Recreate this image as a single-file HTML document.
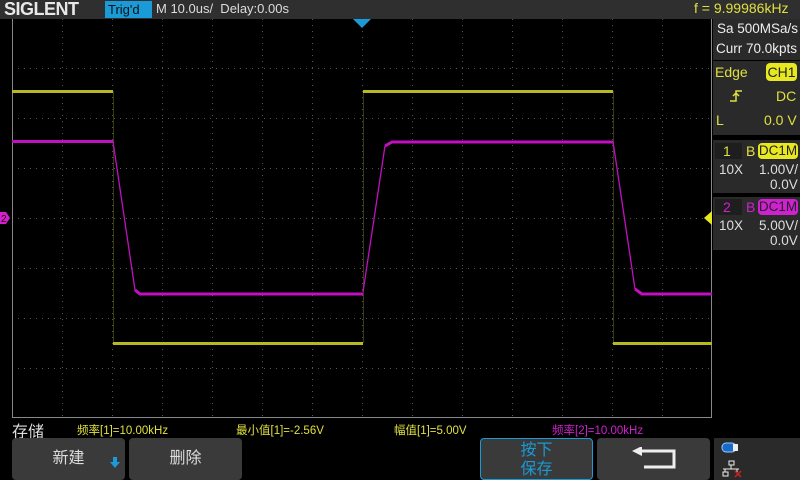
<!DOCTYPE html>
<html><head><meta charset="utf-8"><style>
body{margin:0;width:800px;height:480px;background:#000;overflow:hidden;font-family:"Liberation Sans","Noto Sans CJK SC",sans-serif;position:relative}
.a{position:absolute;white-space:nowrap}
.top{left:0;top:0;width:800px;height:19px;background:#2f2f2f}
.rp{background:#2a2a2a}
.btn{position:absolute;top:438px;height:42px;background:#3a3a3a;border-radius:4px;color:#ddd;font-size:16px;text-align:center}
</style></head><body>
<div class="a top"></div>
<div class="a" style="left:4px;top:-1px;font-size:18px;font-weight:bold;color:#e8e8e8;letter-spacing:-0.5px">SIGLENT</div>
<div class="a" style="left:105px;top:1px;width:44px;height:17px;background:#1a9ad6;color:#111;font-size:13px;line-height:17px;padding-left:3px">Trig'd</div>
<div class="a" style="left:156px;top:1px;color:#ddd;font-size:13px">M 10.0us/&nbsp; Delay:0.00s</div>
<div class="a" style="left:694px;top:0px;color:#e0e040;font-size:14px">f = 9.99986kHz</div>
<svg class="a" style="left:0;top:0" width="800" height="480">
<g stroke="#555" stroke-width="1" stroke-dasharray="1 5">
<line x1="62.5" y1="19" x2="62.5" y2="418"/><line x1="112.5" y1="19" x2="112.5" y2="418"/><line x1="162.5" y1="19" x2="162.5" y2="418"/><line x1="212.5" y1="19" x2="212.5" y2="418"/><line x1="262.5" y1="19" x2="262.5" y2="418"/><line x1="312.5" y1="19" x2="312.5" y2="418"/><line x1="362.5" y1="19" x2="362.5" y2="418"/><line x1="412.5" y1="19" x2="412.5" y2="418"/><line x1="462.5" y1="19" x2="462.5" y2="418"/><line x1="512.5" y1="19" x2="512.5" y2="418"/><line x1="562.5" y1="19" x2="562.5" y2="418"/><line x1="612.5" y1="19" x2="612.5" y2="418"/><line x1="662.5" y1="19" x2="662.5" y2="418"/>
<line x1="12" y1="68.5" x2="712" y2="68.5"/><line x1="12" y1="118.5" x2="712" y2="118.5"/><line x1="12" y1="168.5" x2="712" y2="168.5"/><line x1="12" y1="218.5" x2="712" y2="218.5"/><line x1="12" y1="268.5" x2="712" y2="268.5"/><line x1="12" y1="318.5" x2="712" y2="318.5"/><line x1="12" y1="368.5" x2="712" y2="368.5"/>
</g>
<g stroke="#888" stroke-width="1" fill="none"><line x1="12.5" y1="19" x2="12.5" y2="418"/><line x1="12" y1="417.5" x2="712" y2="417.5"/><line x1="711.5" y1="19" x2="711.5" y2="418"/></g>
<g stroke="#3a3a10" stroke-width="1"><line x1="113.5" y1="91" x2="113.5" y2="343"/><line x1="363.5" y1="91" x2="363.5" y2="343"/><line x1="613.5" y1="91" x2="613.5" y2="343"/></g>
<g stroke="#b8b820" stroke-width="3"><line x1="12" y1="91.5" x2="113" y2="91.5"/><line x1="113" y1="343.5" x2="363" y2="343.5"/><line x1="363" y1="91.5" x2="613" y2="91.5"/><line x1="613" y1="343.5" x2="712" y2="343.5"/></g>
<g stroke="#c010c0" fill="none"><path d="M113 141.5L135 290M363 292L385 146M613 141.5L635 289" stroke-width="1.3"/><path d="M12 141.5H113M135 290L140 294H363M385 146L392 142H613M635 289L642 294H712" stroke-width="3"/></g>
<polygon points="353,19 371,19 362,28" fill="#1a9ad6"/>
<polygon points="0,212 6,212 10,218 6,224 0,224" fill="#d020d0"/>
<text x="1" y="222" font-size="10" fill="#300">2</text>
<polygon points="712,211 712,225 704,218" fill="#e8e820"/>
</svg>
<div class="a rp" style="left:713px;top:19px;width:87px;height:41px"></div>
<div class="a" style="left:717px;top:21px;color:#eee;font-size:13.5px">Sa 500MSa/s</div>
<div class="a" style="left:716px;top:41px;color:#eee;font-size:13.5px">Curr 70.0kpts</div>
<div class="a rp" style="left:713px;top:61px;width:87px;height:74px"></div>
<div class="a" style="left:715px;top:64px;color:#e0e040;font-size:14px">Edge</div>
<div class="a" style="left:766px;top:63px;width:31px;height:18px;background:#e8e820;border-radius:4px;color:#222;font-size:14px;text-align:center;line-height:18px">CH1</div>
<svg class="a" style="left:729px;top:88px" width="16" height="16"><path d="M1 13H7V3H13M4 8L7 5L10 8" stroke="#e0e040" stroke-width="1.5" fill="none"/></svg>
<div class="a" style="left:776px;top:88px;color:#e0e040;font-size:14px">DC</div>
<div class="a" style="left:716px;top:112px;color:#e0e040;font-size:14px">L</div>
<div class="a" style="left:764px;top:112px;color:#e0e040;font-size:14px">0.0 V</div>
<div class="a rp" style="left:713px;top:140px;width:87px;height:53px"></div>
<div class="a" style="left:715px;top:143px;width:27px;height:16px;background:#1e1e1e"></div>
<div class="a" style="left:723px;top:143px;color:#e0e040;font-size:14px">1</div>
<div class="a" style="left:746px;top:143px;color:#e0e040;font-size:14px">B</div>
<div class="a" style="left:758px;top:143px;width:40px;height:16px;background:#e8e820;border-radius:4px;color:#222;font-size:13.5px;text-align:center;line-height:16px">DC1M</div>
<div class="a" style="left:719px;top:162px;color:#ddd;font-size:13.5px">10X</div>
<div class="a" style="left:759px;top:162px;color:#ddd;font-size:13.5px">1.00V/</div>
<div class="a" style="left:770px;top:177px;color:#ddd;font-size:13.5px">0.0V</div>
<div class="a rp" style="left:713px;top:197px;width:87px;height:53px"></div>
<div class="a" style="left:715px;top:199px;width:27px;height:16px;background:#1e1e1e"></div>
<div class="a" style="left:723px;top:199px;color:#d020d0;font-size:14px">2</div>
<div class="a" style="left:746px;top:199px;color:#d020d0;font-size:14px">B</div>
<div class="a" style="left:758px;top:199px;width:40px;height:16px;background:#d020d0;border-radius:4px;color:#222;font-size:13.5px;text-align:center;line-height:16px">DC1M</div>
<div class="a" style="left:719px;top:218px;color:#ddd;font-size:13.5px">10X</div>
<div class="a" style="left:759px;top:218px;color:#ddd;font-size:13.5px">5.00V/</div>
<div class="a" style="left:770px;top:233px;color:#ddd;font-size:13.5px">0.0V</div>
<div class="a" style="left:12px;top:418px;color:#ddd;font-size:16px">存储</div>
<div class="a" style="left:77px;top:422px;color:#e0e040;font-size:11.5px">频率[1]=10.00kHz</div>
<div class="a" style="left:236px;top:422px;color:#e0e040;font-size:11.5px">最小值[1]=-2.56V</div>
<div class="a" style="left:394px;top:422px;color:#e0e040;font-size:11.5px">幅值[1]=5.00V</div>
<div class="a" style="left:552px;top:422px;color:#d020d0;font-size:11.5px">频率[2]=10.00kHz</div>
<div class="btn" style="left:12px;width:113px;line-height:42px">新建</div>
<svg class="a" style="left:109px;top:457px" width="12" height="12"><path d="M4 0h4v5h3l-5 6-5-6h3z" fill="#1a9ad6"/></svg>
<div class="btn" style="left:129px;width:113px;line-height:42px">删除</div>
<div class="btn" style="left:480px;width:113px;border:1px solid #1a9ad6;color:#1a9ad6;line-height:19px;padding-top:2px;box-sizing:border-box;height:42px">按下<br>保存</div>
<div class="btn" style="left:597px;width:113px"></div>
<svg class="a" style="left:630px;top:447px" width="50" height="24"><path d="M8 4h36v16H14" stroke="#eee" stroke-width="3" fill="none"/><polygon points="2,4 12,-1 12,9" fill="#eee"/></svg>
<div class="a rp" style="left:714px;top:438px;width:86px;height:42px"></div>
<svg class="a" style="left:720px;top:440px" width="30" height="40"><rect x="2" y="3" width="14" height="9" rx="4" fill="#1a6acc" stroke="#9cf"/><rect x="13" y="4" width="5" height="7" fill="#eee"/><g stroke="#eee" fill="none"><rect x="9" y="21" width="5" height="4"/><path d="M11 25v4M3 29h16M5 29v3M17 29v3"/><rect x="3" y="32" width="5" height="4"/></g><path d="M15 31l6 6M21 31l-6 6" stroke="#c22" stroke-width="1.5"/></svg>
</body></html>
